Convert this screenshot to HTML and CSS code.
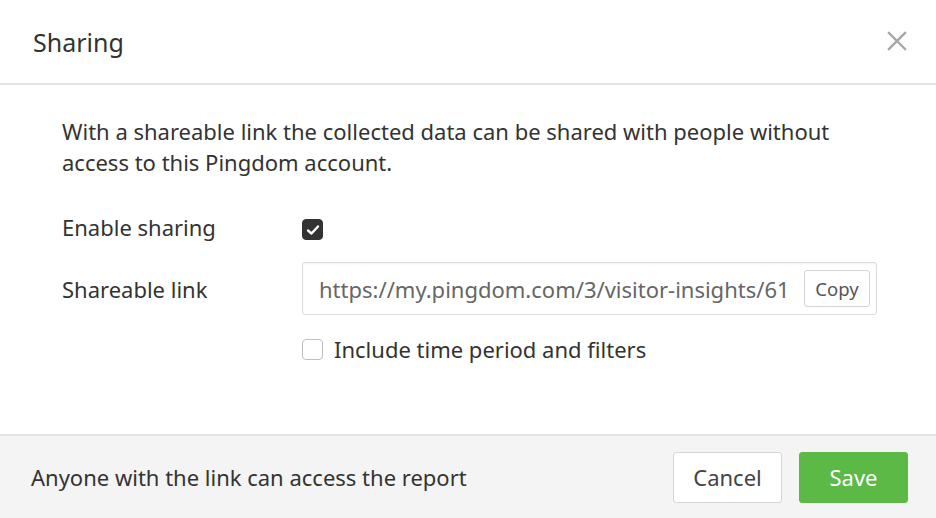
FILE: index.html
```html
<!DOCTYPE html>
<html>
<head>
<meta charset="utf-8">
<link rel="stylesheet" href="styles.css">
</head>
<body>
<div class="modal">
  <header class="modal-header">
    <h1 class="title">Sharing</h1>
    <button class="close" aria-label="Close">
      <svg width="20" height="20" viewBox="0 0 20 20"><path d="M2 2 L18 18 M18 2 L2 18" stroke="#a6a6a6" stroke-width="2.4" stroke-linecap="square"/></svg>
    </button>
  </header>
  <main class="modal-body">
    <p class="intro">With a shareable link the collected data can be shared with people without access to this Pingdom account.</p>
    <div class="form">
      <div class="label row1">Enable sharing</div>
      <div class="field row1">
        <span class="check checked shifted">
          <svg width="14" height="12" viewBox="0 0 14 12"><path d="M2 6.5 L5.5 9.5 L12 2.5" fill="none" stroke="#fff" stroke-width="2.4" stroke-linecap="round" stroke-linejoin="round"/></svg>
        </span>
      </div>
      <div class="label row2">Shareable link</div>
      <div class="field row2">
        <div class="link-input">
          <span class="link-text">https://my.pingdom.com/3/visitor-insights/61</span>
          <button class="copy">Copy</button>
        </div>
      </div>
      <div class="label row3"></div>
      <div class="field row3">
        <span class="check"></span>
        <span class="check-label">Include time period and filters</span>
      </div>
    </div>
  </main>
  <footer class="modal-footer">
    <span class="note">Anyone with the link can access the report</span>
    <div class="actions">
      <button class="btn btn-cancel">Cancel</button>
      <button class="btn btn-save">Save</button>
    </div>
  </footer>
</div>
</body>
</html>
```
FILE: styles.css
```css
* { box-sizing: border-box; }
html, body {
  margin: 0;
  padding: 0;
  background: #fff;
}
body {
  font-family: "Noto Sans", "Open Sans", "Liberation Sans", sans-serif;
  color: #333;
  width: 936px;
  height: 518px;
  overflow: hidden;
}
.modal {
  display: flex;
  flex-direction: column;
  height: 518px;
}
.modal-header {
  height: 85px;
  border-bottom: 2px solid #e3e3e3;
  display: flex;
  align-items: center;
  justify-content: space-between;
  padding: 0 28px 0 33px;
}
.title {
  margin: 0;
  font-size: 25px;
  font-weight: 400;
  color: #333;
}
.close {
  border: 0;
  background: none;
  padding: 0;
  width: 22px;
  height: 22px;
  display: flex;
  align-items: center;
  justify-content: center;
  margin-top: -2px;
}
.modal-body {
  flex: 1;
  padding: 31px 62px 0 62px;
}
.intro {
  margin: 0;
  font-size: 22px;
  line-height: 31px;
  color: #333;
  max-width: 790px;
}
.form {
  display: grid;
  grid-template-columns: 240px 575px;
  row-gap: 0;
  margin-top: 34px;
}
.label {
  font-size: 22px;
  color: #333;
  display: flex;
  align-items: center;
}
.field {
  display: flex;
  align-items: center;
}
.row1 { height: 30px; }
.row2 { height: 53px; margin-top: 20px; }
.row3 { height: 22px; margin-top: 23px; }
.check {
  width: 21px;
  height: 21px;
  border: 1.5px solid #bdbdbd;
  border-radius: 4px;
  background: #fff;
  display: flex;
  align-items: center;
  justify-content: center;
  flex: none;
}
.check.shifted {
  margin-top: 5px;
}
.check.checked {
  background: #333;
  border-color: #333;
}
.check-label {
  margin-left: 11px;
  font-size: 22px;
  color: #333;
}
.link-input {
  width: 575px;
  height: 53px;
  border: 1px solid #dcdcdc;
  border-radius: 3px;
  display: flex;
  align-items: center;
  justify-content: space-between;
  padding: 0 6px 0 16px;
  box-shadow: inset 0 1px 2px rgba(0,0,0,0.05);
}
.link-text {
  font-size: 22px;
  color: #666;
  white-space: nowrap;
  overflow: hidden;
}
.copy {
  font-family: inherit;
  width: 66px;
  height: 37px;
  border: 1px solid #d4d4d4;
  border-radius: 3px;
  background: #fff;
  font-size: 18.5px;
  color: #555;
  padding: 0;
  flex: none;
  margin-left: 14px;
}
.modal-footer {
  height: 84px;
  border-top: 2px solid #e3e3e3;
  background: #f4f4f4;
  display: flex;
  align-items: center;
  justify-content: space-between;
  padding: 0 28px 0 31px;
}
.note {
  font-size: 22px;
  color: #333;
}
.actions {
  display: flex;
  gap: 17px;
}
.btn {
  font-family: inherit;
  height: 51px;
  width: 109px;
  border-radius: 3px;
  font-size: 22px;
  padding: 0;
}
.btn-cancel {
  background: #fff;
  border: 1px solid #d6d6d6;
  color: #444;
}
.btn-save {
  background: #5cb946;
  border: 1px solid #5cb946;
  color: #fff;
}
```
